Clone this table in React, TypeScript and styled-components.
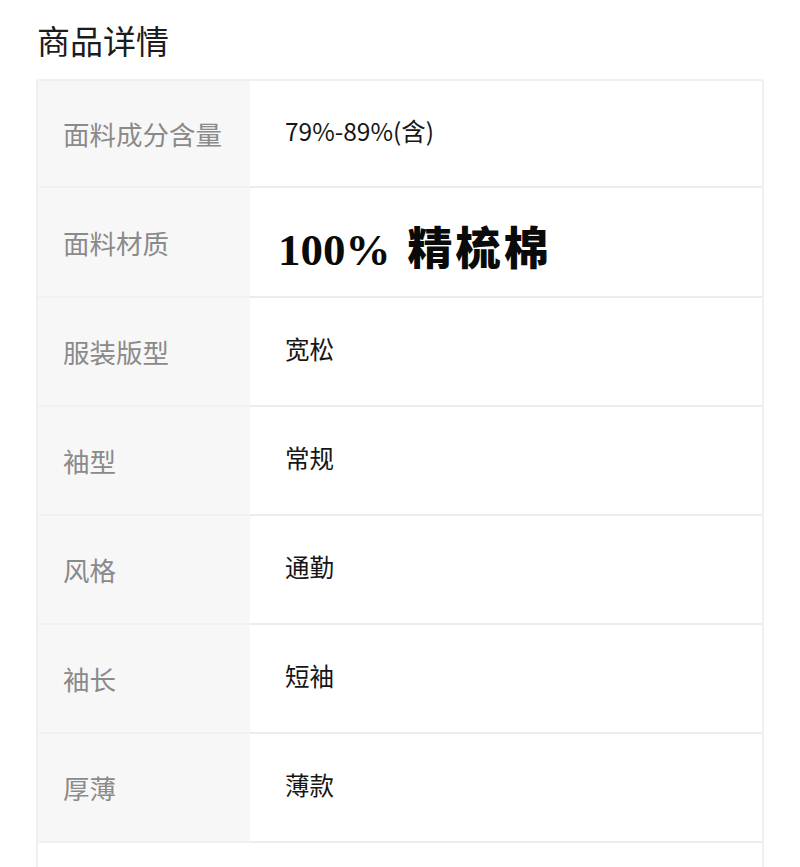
import React from "react";
import styled, { createGlobalStyle } from "styled-components";

const Global = createGlobalStyle`
  html, body { margin: 0; padding: 0; background: #ffffff; }
  body { font-family: "Noto Sans CJK SC", "Noto Sans", sans-serif; }
`;

const Page = styled.div`
  width: 800px;
  height: 867px;
  overflow: hidden;
  padding: 0 36px 0 36px;
  box-sizing: border-box;
`;

const Title = styled.h1`
  margin: 0;
  padding: 16px 0 0 1px;
  height: 79px;
  box-sizing: border-box;
  font-size: 33px;
  line-height: 48px;
  font-weight: 400;
  color: #1c1c1c;
`;

const Table = styled.div`
  display: grid;
  grid-template-columns: 212px 1fr;
  border: 2px solid #efefef;
  border-bottom: none;
  border-radius: 3px 3px 0 0;
  width: 728px;
  box-sizing: border-box;
`;

const Label = styled.div<{ $h: number; $blank?: boolean }>`
  height: ${(p) => p.$h}px;
  background: ${(p) => (p.$blank ? "#ffffff" : "#f7f7f7")};
  display: flex;
  align-items: center;
  padding-left: 25px;
  box-sizing: border-box;
  font-size: 26.5px;
  color: #8a8a8a;
  border-bottom: 2px solid #f1f1f1;
`;

const Value = styled.div<{ $h: number }>`
  height: ${(p) => p.$h}px;
  display: flex;
  align-items: center;
  padding-left: 35px;
  padding-bottom: 7px;
  box-sizing: border-box;
  font-size: 24.5px;
  color: #161616;
  border-bottom: 2px solid #ececec;
`;

const Big = styled.span`
  display: inline-flex;
  align-items: baseline;
  margin-left: -7px;
  margin-top: 14px;
  color: #0a0a0a;
`;

const BigNum = styled.span`
  font-family: "Liberation Serif", serif;
  font-weight: 700;
  font-size: 45px;
  margin-right: 17px;
`;

const BigCjk = styled.span`
  font-family: "Noto Sans CJK SC", sans-serif;
  font-weight: 900;
  font-size: 45px;
  letter-spacing: 3px;
`;

const rows: { label: string; value: React.ReactNode; h: number }[] = [
  { label: "面料成分含量", value: "79%-89%(含)", h: 107 },
  {
    label: "面料材质",
    value: (
      <Big>
        <BigNum>100%</BigNum>
        <BigCjk>精梳棉</BigCjk>
      </Big>
    ),
    h: 110,
  },
  { label: "服装版型", value: "宽松", h: 109 },
  { label: "袖型", value: "常规", h: 109 },
  { label: "风格", value: "通勤", h: 109 },
  { label: "袖长", value: "短袖", h: 109 },
  { label: "厚薄", value: "薄款", h: 109 },
  { label: "", value: "", h: 60 },
];

export default function App() {
  return (
    <Page>
      <Global />
      <Title>商品详情</Title>
      <Table>
        {rows.map((r, i) => (
          <React.Fragment key={i}>
            <Label $h={r.h} $blank={r.label === ""}>
              {r.label}
            </Label>
            <Value $h={r.h}>{r.value}</Value>
          </React.Fragment>
        ))}
      </Table>
    </Page>
  );
}
